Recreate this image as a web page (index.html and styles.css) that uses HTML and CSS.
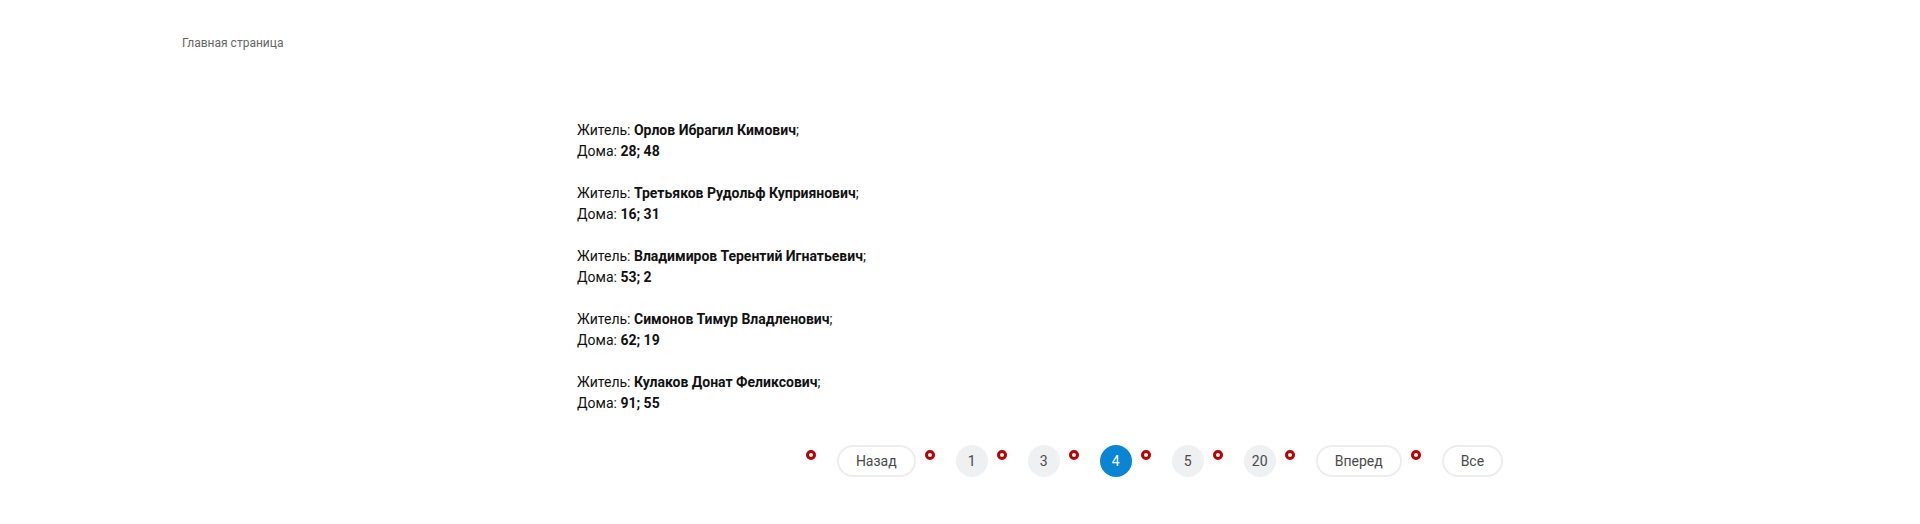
FILE: index.html
```html
<!DOCTYPE html>
<html lang="ru">
<head>
<meta charset="utf-8">
<title>Жители</title>
<link rel="stylesheet" href="styles.css">
</head>
<body>
<div class="page">
  <nav class="breadcrumbs"><a href="#" class="crumb">Главная страница</a></nav>
  <div class="layout">
    <aside class="side"></aside>
    <main class="content">
      <div class="residents">
        <div class="resident">Житель: <b>Орлов Ибрагил Кимович</b>;<br>Дома: <b>28; 48</b></div>
        <div class="resident">Житель: <b>Третьяков Рудольф Куприянович</b>;<br>Дома: <b>16; 31</b></div>
        <div class="resident">Житель: <b>Владимиров Терентий Игнатьевич</b>;<br>Дома: <b>53; 2</b></div>
        <div class="resident">Житель: <b>Симонов Тимур Владленович</b>;<br>Дома: <b>62; 19</b></div>
        <div class="resident">Житель: <b>Кулаков Донат Феликсович</b>;<br>Дома: <b>91; 55</b></div>
      </div>
      <ul class="pager">
        <li class="pager-item"><a href="#" class="pill">Назад</a></li>
        <li class="pager-item"><a href="#" class="num">1</a></li>
        <li class="pager-item"><a href="#" class="num">3</a></li>
        <li class="pager-item"><span class="num active">4</span></li>
        <li class="pager-item"><a href="#" class="num">5</a></li>
        <li class="pager-item"><a href="#" class="num">20</a></li>
        <li class="pager-item"><a href="#" class="pill">Вперед</a></li>
        <li class="pager-item"><a href="#" class="pill">Все</a></li>
      </ul>
    </main>
  </div>
</div>
</body>
</html>
```
FILE: styles.css
```css
html, body {
  margin: 0;
  padding: 0;
  background: #fff;
}
body {
  font-family: Roboto, "Liberation Sans", Arial, sans-serif;
  color: #111;
}
.page {
  padding: 34px 188px 0 182px;
}
.breadcrumbs {
  font-size: 12px;
  line-height: 18px;
  height: 18px;
}
.crumb {
  color: #666;
  text-decoration: none;
}
.layout {
  display: grid;
  grid-template-columns: 395px 1fr;
  margin-top: 68px;
}
.residents {
  font-size: 14px;
  line-height: 21px;
}
.resident {
  margin-bottom: 21px;
}
.resident:last-child {
  margin-bottom: 0;
}
.resident b {
  font-weight: 700;
}
.pager {
  list-style: none;
  margin: 31px 0 0;
  padding: 0;
  display: flex;
  justify-content: center;
  gap: 9px;
  font-size: 14px;
}
.pager-item {
  display: flex;
  align-items: flex-start;
}
.pager-item::before {
  content: "";
  box-sizing: border-box;
  width: 10px;
  height: 10px;
  margin-top: 5px;
  margin-right: 21px;
  border-radius: 50%;
  border: 3.5px solid #b80000;
  background: #fff;
}
.pill, .num {
  box-sizing: border-box;
  height: 32px;
  display: flex;
  align-items: center;
  justify-content: center;
  text-decoration: none;
  color: #4a4a4a;
}
.pill {
  padding: 0 17px;
  border: 2px solid #ededed;
  border-radius: 16px;
}
.num {
  width: 32px;
  border-radius: 50%;
  background: #eef0f2;
}
.num.active {
  background: #0a85d4;
  color: #fff;
}
```
